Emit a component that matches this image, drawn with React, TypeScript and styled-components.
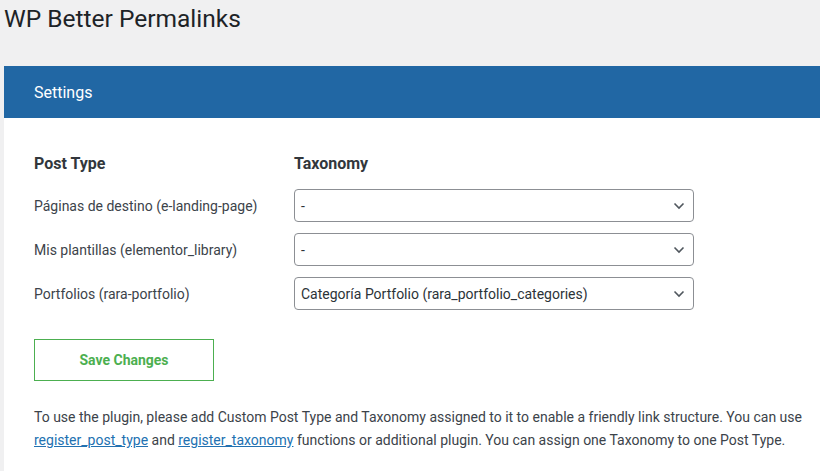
import React from "react";
import styled, { createGlobalStyle } from "styled-components";

const Global = createGlobalStyle`
  html, body { margin: 0; padding: 0; background: #f0f0f1; }
  body { font-family: Roboto, "Liberation Sans", sans-serif; color: #3c434a; overflow: hidden; }
`;

const Page = styled.div`
  padding: 0 0 0 4px;
  width: 820px;
  box-sizing: border-box;
`;

const Title = styled.h1`
  margin: 0;
  padding: 6px 0 0;
  height: 66px;
  box-sizing: border-box;
  font-size: 24.5px;
  font-weight: 400;
  color: #1d2327;
  line-height: 26px;
`;

const Panel = styled.div`
  background: #fff;
  min-height: 405px;
`;

const PanelHeader = styled.div`
  background: #2167a4;
  color: #fff;
  height: 52px;
  display: flex;
  align-items: center;
  padding-left: 30px;
  font-size: 16px;
`;

const Body = styled.div`
  padding: 35px 0 0 30px;
`;

const Grid = styled.div`
  display: grid;
  grid-template-columns: 260px 400px;
  row-gap: 11px;
  align-items: center;
`;

const HeadCell = styled.div`
  font-weight: 700;
  font-size: 16px;
  color: #32373c;
  height: 22px;
  line-height: 22px;
  margin-bottom: 3px;
`;

const Label = styled.div`
  font-size: 14px;
  color: #3c434a;
`;

const SelectBox = styled.div`
  height: 33px;
  box-sizing: border-box;
  border: 1px solid #8c8f94;
  border-radius: 4px;
  display: flex;
  align-items: center;
  justify-content: space-between;
  padding: 0 8px 0 6px;
  font-size: 14px;
  color: #2c3338;
`;

const Button = styled.button`
  margin-top: 29px;
  width: 180px;
  height: 42px;
  background: #fff;
  border: 1px solid #4caf50;
  color: #4caf50;
  font-family: inherit;
  font-weight: 700;
  font-size: 14px;
  cursor: pointer;
`;

const Note = styled.p`
  margin: 25px 0 0;
  font-size: 14px;
  line-height: 23px;
  color: #3c434a;
`;

const Link = styled.a`
  color: #2271b1;
  text-decoration: underline;
`;

const Chevron = () => (
  <svg width="12" height="8" viewBox="0 0 12 8" fill="none">
    <path d="M1.5 1.5 L6 6 L10.5 1.5" stroke="#50575e" strokeWidth="1.6" />
  </svg>
);

const rows = [
  ["Páginas de destino (e-landing-page)", "-"],
  ["Mis plantillas (elementor_library)", "-"],
  ["Portfolios (rara-portfolio)", "Categoría Portfolio (rara_portfolio_categories)"],
];

export default function App() {
  return (
    <Page>
      <Global />
      <Title>WP Better Permalinks</Title>
      <Panel>
        <PanelHeader>Settings</PanelHeader>
        <Body>
          <Grid>
            <HeadCell>Post Type</HeadCell>
            <HeadCell>Taxonomy</HeadCell>
            {rows.map(([l, v]) => (
              <React.Fragment key={l}>
                <Label>{l}</Label>
                <SelectBox>
                  <span>{v}</span>
                  <Chevron />
                </SelectBox>
              </React.Fragment>
            ))}
          </Grid>
          <Button>Save Changes</Button>
          <Note>
            To use the plugin, please add Custom Post Type and Taxonomy assigned to it to enable a friendly link structure. You can use{" "}
            <Link href="#">register_post_type</Link> and <Link href="#">register_taxonomy</Link> functions or additional plugin. You can assign one Taxonomy to one Post Type.
          </Note>
        </Body>
      </Panel>
    </Page>
  );
}
